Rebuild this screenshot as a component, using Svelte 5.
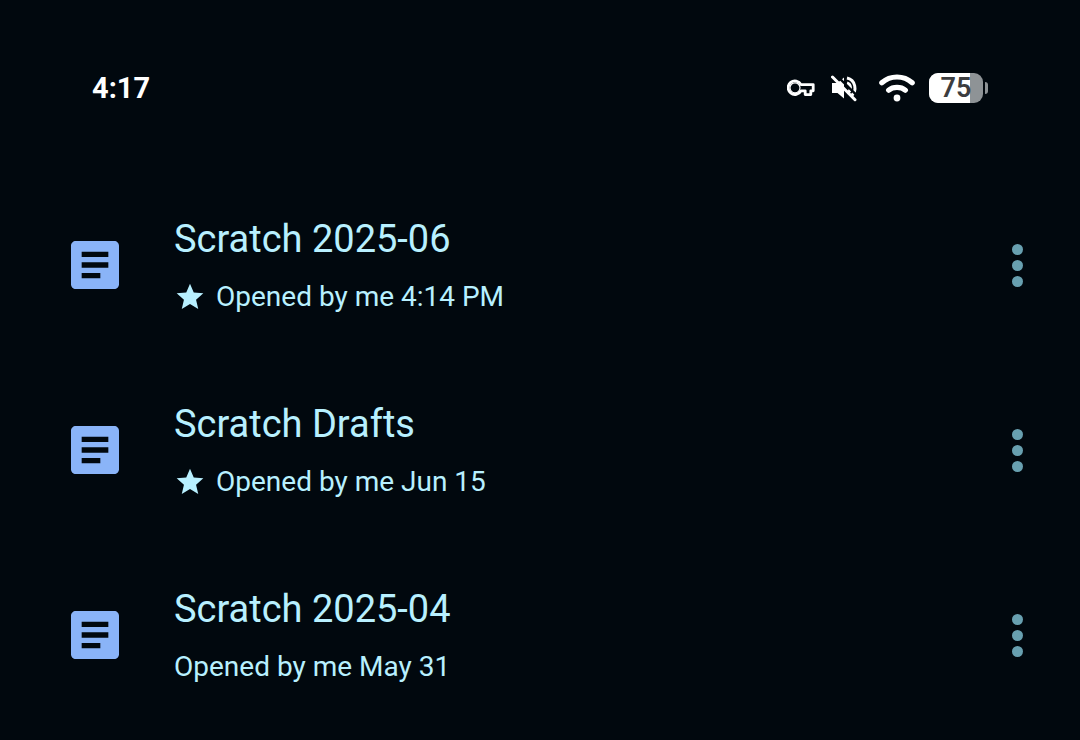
<script>
const files = [
  { name: 'Scratch 2025-06', opened: 'Opened by me 4:14 PM', starred: true },
  { name: 'Scratch Drafts', opened: 'Opened by me Jun 15', starred: true },
  { name: 'Scratch 2025-04', opened: 'Opened by me May 31', starred: false },
];

const battery = 75;
</script>

<div class="screen">
  <header class="status">
    <time class="status__time">4:17</time>

    <div class="status__icons">
      <!-- vpn key -->
      <svg class="status__key" width="28" height="18" viewBox="0 0 28 18">
        <path
          d="M14 5.600H26.200V11.800H23.800V15.600H18.200V11.800H14A6.800 6.800 0 1 1 14 5.600Z"
          fill="none" stroke="#fff" stroke-width="2.800" stroke-linejoin="round"
        />
        <circle cx="8" cy="8.800" r="5" fill="none" stroke="#fff" stroke-width="1.200" />
      </svg>

      <!-- sound off -->
      <svg class="status__mute" width="28" height="28" viewBox="0 0 28 28">
        <path d="M1 9h5.500l6.500-5.500v21l-6.500-5.500H1z" fill="#fff" />
        <path
          d="M16 9a5.200 5.200 0 0 1 0 9.800M16 4a10.200 10.200 0 0 1 4 18"
          fill="none" stroke="#fff" stroke-width="3"
        />
        <path d="M3.500 -.5L29 24.500" stroke="#01080e" stroke-width="2.400" />
        <path d="M1.500 3L24 25.700" stroke="#fff" stroke-width="3" stroke-linecap="round" />
      </svg>

      <!-- wifi -->
      <svg class="status__wifi" width="36" height="28" viewBox="0 0 36 28">
        <path
          d="M2.800 8.800Q9.200 3 18 3T33.200 8.800M9.600 16.200Q13 13.400 18 13.400T26.400 16.200"
          fill="none" stroke="#fff" stroke-width="5.200" stroke-linecap="round"
        />
        <circle cx="18" cy="24" r="3.400" fill="#fff" />
      </svg>

      <div class="battery">
        <div class="battery__body">
          <div class="battery__level" style="width: {battery}%"></div>
          <span class="battery__text">{battery}</span>
        </div>
        <div class="battery__cap"></div>
      </div>
    </div>
  </header>

  <ul class="files">
    {#each files as file}
      <li class="file">
        <svg class="file__icon" width="48" height="48" viewBox="3 3 18 18">
          <path
            d="M19.200 3H4.800C3.800 3 3 3.800 3 4.800v14.400c0 1 .8 1.800 1.800 1.800h14.400c1 0 1.800-.8 1.800-1.800V4.800C21 3.800 20.200 3 19.200 3zM14 17H7v-2h7v2zm3-4H7v-2h10v2zm0-4H7V7h10v2z"
            fill="#8ab4f8"
          />
        </svg>

        <div class="file__info">
          <h2 class="file__name">{file.name}</h2>
          <p class="file__opened">
            {#if file.starred}
              <svg class="file__star" width="32" height="32" viewBox="0 0 24 24" role="img" aria-label="Starred">
                <path
                  d="M12 17.270L18.180 21l-1.640-7.030L22 9.240l-7.190-.61L12 2 9.190 8.630 2 9.240l5.460 4.730L5.820 21z"
                  fill="#b8f0ff"
                />
              </svg>
            {/if}
            <span>{file.opened}</span>
          </p>
        </div>

        <button class="file__more" type="button" aria-label="More actions for {file.name}">
          <svg width="64" height="64" viewBox="0 0 64 64">
            <circle cx="31.500" cy="16.500" r="5.500" />
            <circle cx="31.500" cy="32.500" r="5.500" />
            <circle cx="31.500" cy="48.500" r="5.500" />
          </svg>
        </button>
      </li>
    {/each}
  </ul>
</div>

<style>
:global(body) {
  background: #01080e;
}

.screen {
  color: #b8f0ff;
  font-family: Roboto, "Liberation Sans", sans-serif;
}

.status {
  display: flex;
  align-items: center;
  justify-content: space-between;
  padding: 68px 92px 64px;
  color: #fff;
}

.status__time {
  font-size: 29px;
  font-weight: 700;
  line-height: 40px;
}

.status__icons {
  display: flex;
  align-items: center;
}

.status__key {
  margin-right: 16px;
}

.status__mute {
  margin-right: 20px;
}

.status__wifi {
  margin-right: 14px;
}

.battery {
  display: flex;
  align-items: center;
  gap: 2px;
}

.battery__body {
  display: grid;
  width: 54px;
  height: 30px;
  border-radius: 9px;
  background: #8e9396;
}

.battery__level,
.battery__text {
  grid-area: 1 / 1;
}

.battery__level {
  border-radius: 9px 0 0 9px;
  background: #fff;
}

.battery__text {
  color: #3c3d3f;
  font-size: 27px;
  font-weight: 600;
  line-height: 30px;
  text-align: center;
}

.battery__cap {
  width: 3px;
  height: 12px;
  border-radius: 0 4px 4px 0;
  background: #8e9396;
}

.files {
  margin: 0;
  padding: 0;
  list-style: none;
}

.file {
  display: flex;
  align-items: center;
  min-height: 185px;
  padding: 0 30px 0 71px;
  box-sizing: border-box;
}

.file__icon {
  flex: none;
}

.file__info {
  flex: 1;
  min-width: 0;
  padding: 2px 0 0 55px;
}

.file__name {
  margin: 0 0 14px;
  font-size: 38px;
  font-weight: 400;
  line-height: 48px;
}

.file__opened {
  display: flex;
  align-items: center;
  gap: 10px;
  margin: 0;
  font-size: 28px;
  line-height: 40px;
}

.file__more {
  display: flex;
  flex: none;
  padding: 0;
  border: 0;
  background: none;
  cursor: pointer;
}

.file__more circle {
  fill: #68a0b0;
}
</style>
